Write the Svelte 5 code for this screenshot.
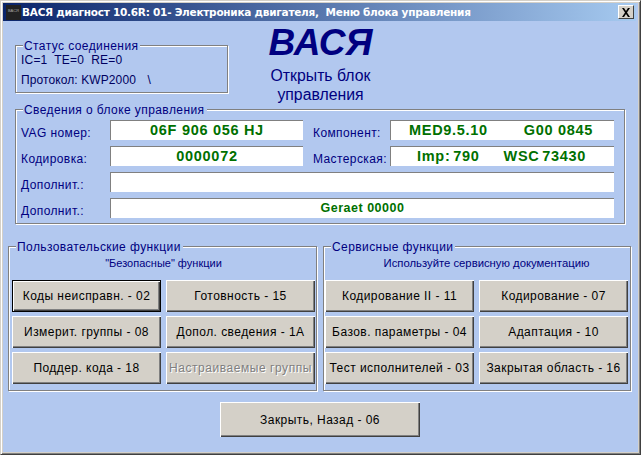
<script>
  const leftButtons = [
    { label: 'Коды неисправн. - 02', focus: true },
    { label: 'Готовность - 15' },
    { label: 'Измерит. группы - 08' },
    { label: 'Допол. сведения - 1А' },
    { label: 'Поддер. кода - 18' },
    { label: 'Настраиваемые группы', disabled: true }
  ];
  const rightButtons = [
    { label: 'Кодирование II - 11' },
    { label: 'Кодирование - 07' },
    { label: 'Базов. параметры - 04' },
    { label: 'Адаптация - 10' },
    { label: 'Тест исполнителей - 03' },
    { label: 'Закрытая область - 16' }
  ];
</script>

<div class="window">
  <header class="titlebar">
    <span class="appicon">ВАСЯ</span>
    <span class="title">ВАСЯ диагност 10.6R: 01- Электроника двигателя,&nbsp; Меню блока управления</span>
    <span class="close">
      <svg width="10" height="9" viewBox="0 0 10 9"><path d="M1 0h2l2 3 2-3h2L6 4.500 9 9H7L5 6 3 9H1l3-4.500z" fill="#000"/></svg>
    </span>
  </header>

  <main class="body">
    <div class="top">
      <section class="group status">
        <span class="legend">Статус соединения</span>
        <div class="line ic">IC=1&nbsp; TE=0&nbsp; RE=0</div>
        <div class="line proto">Протокол: KWP2000 <span class="spin">\</span></div>
      </section>
      <div class="brand">
        <div class="logo">ВАСЯ</div>
        <div class="sub">Открыть блок<br />управления</div>
      </div>
    </div>

    <section class="group details">
      <span class="legend">Сведения о блоке управления</span>
      <div class="grid">
        <span class="lbl">VAG номер:</span>
        <div class="field big">06F 906 056 HJ</div>
        <span class="lbl r1">Компонент:</span>
        <div class="field big split"><span>MED9.5.10</span><span>G00 0845</span></div>

        <span class="lbl">Кодировка:</span>
        <div class="field big">0000072</div>
        <span class="lbl r1">Мастерская:</span>
        <div class="field big split tight"><span>Imp: 790</span><span>WSC 73430</span></div>

        <span class="lbl">Дополнит.:</span>
        <div class="field wide"></div>

        <span class="lbl">Дополнит.:</span>
        <div class="field wide small">Geraet 00000</div>
      </div>
    </section>

    <div class="functions">
      <section class="group fn">
        <span class="legend">Пользовательские функции</span>
        <div class="note n1">"Безопасные" функции</div>
        <div class="buttons">
          {#each leftButtons as b}
            <button class:focus={b.focus} disabled={b.disabled}>{b.label}</button>
          {/each}
        </div>
      </section>
      <section class="group fn">
        <span class="legend">Сервисные функции</span>
        <div class="note n2">Используйте сервисную документацию</div>
        <div class="buttons">
          {#each rightButtons as b}
            <button>{b.label}</button>
          {/each}
        </div>
      </section>
    </div>

    <div class="footer">
      <button class="closebtn">Закрыть, Назад - 06</button>
    </div>
  </main>
</div>

<style>
  :global(body) {
    margin: 0;
    background: #fff;
  }
  .window {
    width: 641px;
    height: 455px;
    box-sizing: border-box;
    padding: 2px 4px 2px 2px;
    background: #b2c8ef;
    border-left: 1px solid #d4d0c8;
    border-top: 1px solid #d4d0c8;
    border-right: 1px solid #404040;
    border-bottom: 1px solid #404040;
    box-shadow: inset 1px 1px 0 #fff, inset -1px -1px 0 #808080, inset 2px 2px 0 #d4d0c8, inset -2px -2px 0 #d4d0c8;
    font-family: "Liberation Sans", Arial, sans-serif;
    font-size: 12px;
    color: #000;
    overflow: hidden;
  }
  .titlebar {
    height: 18px;
    display: flex;
    align-items: center;
    background: linear-gradient(90deg, #0a246a 0%, #a6caf0 100%);
    color: #fff;
    padding-left: 3px;
    padding-right: 2px;
  }
  .appicon {
    width: 15px;
    height: 15px;
    background: #222;
    color: #aaa;
    font-size: 4px;
    line-height: 12px;
    text-align: center;
    overflow: hidden;
    flex: none;
    margin-right: 1px;
  }
  .title {
    flex: 1;
    font-family: "DejaVu Sans", sans-serif;
    font-weight: 700;
    font-size: 10.500px;
    white-space: nowrap;
    letter-spacing: -0.25px;
  }
  .close {
    width: 16px;
    height: 14px;
    flex: none;
    box-sizing: border-box;
    background: #d4d0c8;
    border: 1px solid;
    border-color: #fff #404040 #404040 #fff;
    display: flex;
    align-items: center;
    justify-content: center;
  }
  .body {
    padding: 0 11px 0 12px;
  }
  .group {
    position: relative;
    box-sizing: border-box;
    border: 1px solid #808080;
    box-shadow: 1px 1px 0 #fff, inset 1px 1px 0 #fff;
  }
  .legend {
    position: absolute;
    left: 7px;
    top: -7px;
    padding: 0 2px 0 1px;
    background: #b2c8ef;
    color: #000080;
    font-size: 12px;
    line-height: 14px;
    letter-spacing: 0.42px;
    white-space: nowrap;
  }
  .top {
    display: flex;
    height: 88px;
  }
  .status {
    width: 213px;
    height: 48px;
    margin-top: 24px;
    padding: 7px 5px;
    flex: none;
  }
  .line {
    line-height: 14px;
    color: #000060;
  }
  .ic {
    letter-spacing: 0.2px;
  }
  .proto {
    margin-top: 6px;
    letter-spacing: 0.1px;
  }
  .spin {
    margin-left: 8px;
  }
  .brand {
    width: 140px;
    margin-left: 22px;
    text-align: center;
    color: #000080;
  }
  .logo {
    font-size: 37px;
    font-weight: 700;
    font-style: italic;
    line-height: 40px;
    margin-top: 2px;
    color: #000080;
    margin-left: 1px;
  }
  .sub {
    font-size: 15.800px;
    line-height: 19px;
    color: #000080;
    margin-top: 3px;
    padding-left: 1px;
  }
  .details {
    width: 610px;
    height: 115px;
    margin-top: 0;
    padding: 10px 10px 0 5px;
  }
  .grid {
    display: grid;
    grid-template-columns: 89px 193px 87px 224px;
    grid-auto-rows: 20px;
    row-gap: 6px;
    align-items: center;
  }
  .lbl {
    color: #000080;
    font-size: 12px;
    letter-spacing: 0.4px;
    white-space: nowrap;
    padding-top: 5px;
  }
  .r1 {
    padding-left: 10px;
  }
  .field {
    height: 20px;
    box-sizing: border-box;
    background: #fff;
    border-top: 1px solid #808080;
    border-left: 1px solid #808080;
    color: #007000;
    font-weight: 700;
    font-size: 13px;
    line-height: 18px;
    text-align: center;
    white-space: nowrap;
    letter-spacing: 0.3px;
  }
  .big {
    font-size: 14.500px;
    letter-spacing: 0.7px;
  }
  .split {
    display: flex;
    justify-content: space-between;
    padding: 0 21px 0 18px;
  }
  .tight {
    padding: 0 28px 0 26px;
    word-spacing: -2px;
  }
  .wide {
    grid-column: 2 / span 3;
  }
  .small {
    font-size: 12.500px;
    letter-spacing: 0.5px;
    line-height: 19px;
  }
  .functions {
    display: grid;
    grid-template-columns: 309px 308px;
    column-gap: 6px;
    margin-top: 22px;
    margin-left: -7px;
  }
  .fn {
    height: 145px;
    padding: 0 2px 0 3px;
  }
  .fn + .fn {
    padding-left: 1px;
  }
  .note {
    text-align: center;
    font-size: 11px;
    line-height: 12px;
    color: #000080;
    margin-top: 10px;
    height: 23px;
  }
  .n1 {
    padding-left: 1px;
  }
  .n2 {
    padding-left: 20px;
    font-size: 11.300px;
  }
  .buttons {
    display: grid;
    grid-template-columns: 149px 149px;
    column-gap: 5px;
    row-gap: 4px;
    grid-auto-rows: 32px;
  }
  button {
    box-sizing: border-box;
    margin: 0;
    padding: 0;
    background: #d4d0c8;
    border: none;
    border-radius: 0;
    box-shadow: inset 1px 1px 0 #fff, inset -1px -1px 0 #404040, inset -2px -2px 0 #808080;
    font-family: "Liberation Sans", Arial, sans-serif;
    font-size: 12px;
    letter-spacing: 0.45px;
    color: #000;
    white-space: nowrap;
    text-align: center;
  }
  button.focus {
    box-shadow: inset 0 0 0 1px #000, inset 2px 2px 0 #fff, inset -2px -2px 0 #404040, inset -3px -3px 0 #808080;
  }
  button:disabled {
    color: #808080;
    text-shadow: 1px 1px 0 #fff;
    letter-spacing: 0.55px;
  }
  .footer {
    display: flex;
    justify-content: center;
    margin-top: 11px;
  }
  .closebtn {
    width: 200px;
    height: 35px;
  }
</style>
